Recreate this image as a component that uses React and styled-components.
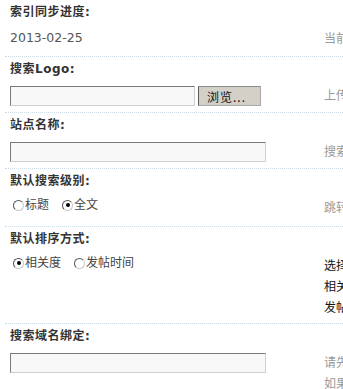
import React from "react";
import styled, { createGlobalStyle } from "styled-components";

const GlobalStyle = createGlobalStyle`
  html, body {
    margin: 0;
    padding: 0;
    background: #fff;
    overflow: hidden;
  }
  body {
    font: 12px "DejaVu Sans", "Noto Sans CJK SC", sans-serif;
    color: #333;
  }
`;

const Page = styled.div`
  width: 720px;
  padding-left: 5px;
`;

const Section = styled.div`
  border-top: ${(p) => (p.first ? "none" : "1px dotted #c9dce8")};
`;

const Label = styled.div`
  padding: 3px 0 8px 5px;
  line-height: 18px;
  font-weight: bold;
  color: #333;
  letter-spacing: 0.5px;
`;

const FieldRow = styled.div`
  display: grid;
  grid-template-columns: 314px 1fr;
  align-items: start;
  padding: 0 0 ${(p) => p.pad || 5}px 5px;
`;

const Cell = styled.div`
  display: flex;
  align-items: center;
  gap: 3px;
`;

const Value = styled.div`
  font-size: 12.5px;
  line-height: 17px;
  color: #555;
`;

const Tips = styled.div`
  line-height: 21px;
  white-space: nowrap;
  color: ${(p) => (p.dark ? "#111" : "#999")};
`;

const TextInput = styled.input`
  box-sizing: border-box;
  width: ${(p) => p.w}px;
  height: 20px;
  margin: 0;
  padding: 0 3px;
  background: #f8f8f8;
  border: 1px solid;
  border-color: #7a7a7a #cfcfcf #cfcfcf #7a7a7a;
  font: inherit;
  outline: none;
`;

const Browse = styled.button`
  box-sizing: border-box;
  width: 63px;
  height: 20px;
  margin: 0;
  padding: 0 0 0 8px;
  text-align: left;
  background: #d4d0c8;
  border: 1px solid;
  border-color: #8a8a8a #aaa #aaa #5a5a5a;
  color: #111;
  font: 12px "Noto Sans CJK SC", sans-serif;
  letter-spacing: 1px;
`;

const RadioGroup = styled.div`
  display: flex;
  gap: 13px;
  padding-left: 3px;
  line-height: 14px;
  color: #444;
`;

const RadioItem = styled.label`
  display: flex;
  align-items: center;
  gap: 1px;
`;

const Dot = styled.span`
  position: relative;
  box-sizing: border-box;
  width: 11px;
  height: 11px;
  border-radius: 50%;
  background: #fff;
  border: 1px solid;
  border-color: #555 #c8c8c8 #c8c8c8 #555;
  &::after {
    content: "";
    display: ${(p) => (p.on ? "block" : "none")};
    position: absolute;
    left: 2.5px;
    top: 2.5px;
    width: 4px;
    height: 4px;
    border-radius: 50%;
    background: #000;
  }
`;

const Radio = ({ on, children }) => (
  <RadioItem>
    <Dot on={on ? 1 : 0} />
    {children}
  </RadioItem>
);

export default function App() {
  return (
    <Page>
      <GlobalStyle />
      <Section first>
        <Label>索引同步进度:</Label>
        <FieldRow pad={6}>
          <Value>2013-02-25</Value>
          <Tips>当前索引同步到的日期</Tips>
        </FieldRow>
      </Section>

      <Section>
        <Label>搜索Logo:</Label>
        <FieldRow>
          <Cell>
            <TextInput w={185} />
            <Browse>浏览...</Browse>
          </Cell>
          <Tips>上传搜索页面显示的Logo图片</Tips>
        </FieldRow>
      </Section>

      <Section>
        <Label>站点名称:</Label>
        <FieldRow>
          <Cell>
            <TextInput w={256} />
          </Cell>
          <Tips>搜索页面显示的站点名称</Tips>
        </FieldRow>
      </Section>

      <Section>
        <Label>默认搜索级别:</Label>
        <FieldRow pad={7}>
          <RadioGroup>
            <Radio>标题</Radio>
            <Radio on>全文</Radio>
          </RadioGroup>
          <Tips>跳转到搜索页面时默认的搜索级别</Tips>
        </FieldRow>
      </Section>

      <Section>
        <Label>默认排序方式:</Label>
        <FieldRow pad={4}>
          <RadioGroup>
            <Radio on>相关度</Radio>
            <Radio>发帖时间</Radio>
          </RadioGroup>
          <Tips dark>
            选择搜索结果的默认排序方式
            <br />
            相关度: 按照与关键词的相关程度排序
            <br />
            发帖时间: 按照帖子发表的时间排序
          </Tips>
        </FieldRow>
      </Section>

      <Section>
        <Label>搜索域名绑定:</Label>
        <FieldRow>
          <Cell>
            <TextInput w={256} />
          </Cell>
          <Tips>
            请先将域名解析到服务器
            <br />
            如果不需要绑定请留空
          </Tips>
        </FieldRow>
      </Section>
    </Page>
  );
}
